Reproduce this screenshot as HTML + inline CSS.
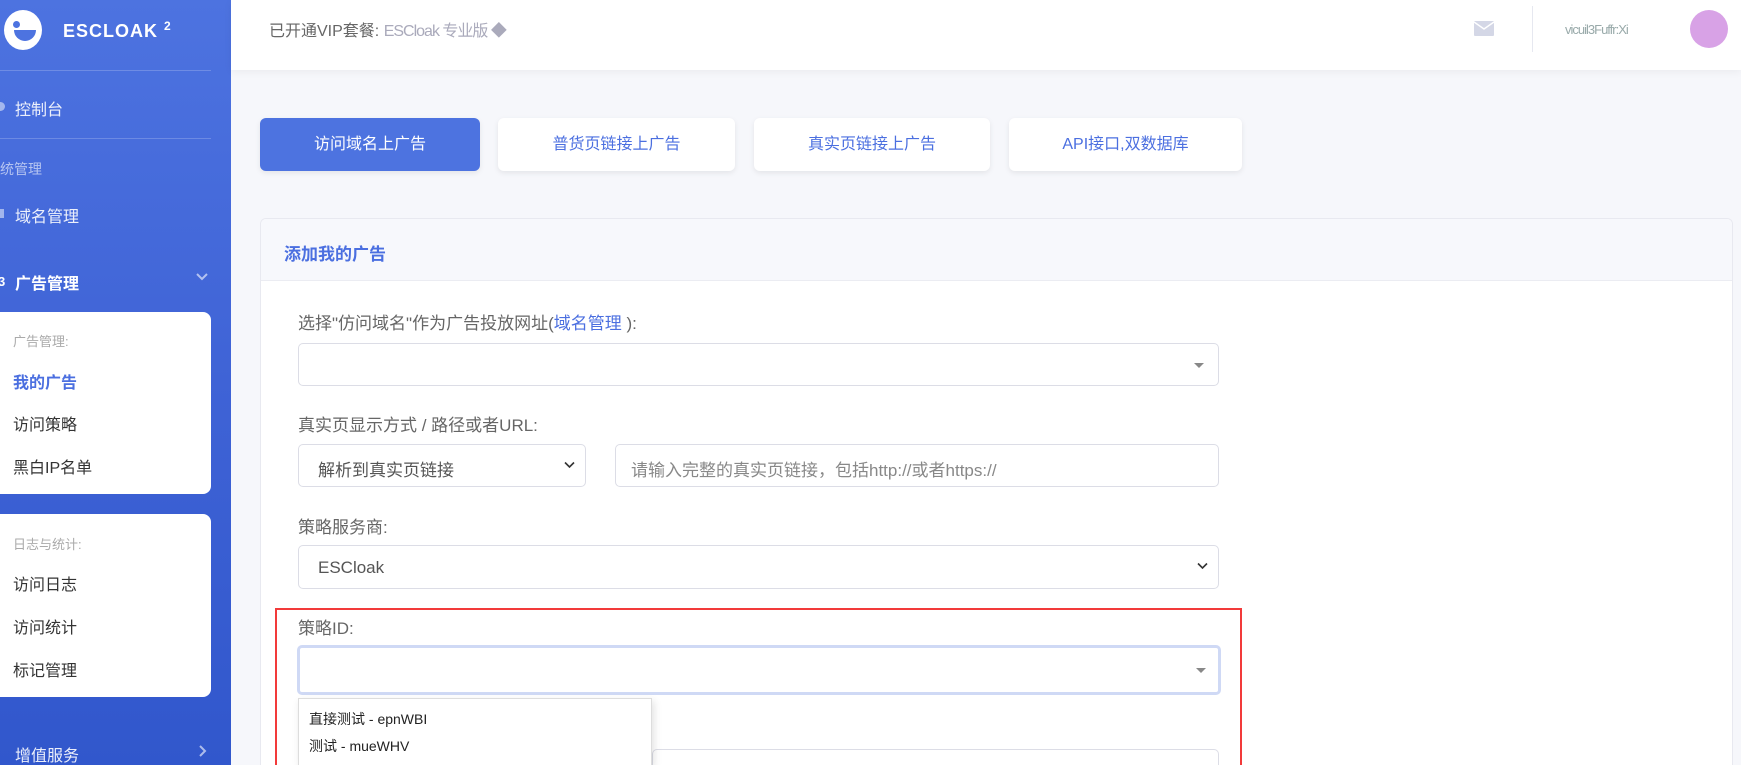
<!DOCTYPE html>
<html><head><meta charset="utf-8"><style>
*{box-sizing:border-box;margin:0;padding:0}
html{width:1741px;height:765px;overflow:hidden}
body{width:1741px;height:765px;overflow:hidden;background:#f6f7fb;font-family:"Liberation Sans","Noto Sans CJK SC",sans-serif;position:relative;color:#555}
.abs{position:absolute}
#side{left:0;top:0;width:231px;height:765px;background:linear-gradient(180deg,#4d73e0 0%,#3f63d6 50%,#3157cc 100%)}
.st{color:#fff;font-size:16px;white-space:nowrap}
.card{background:#fff;border-radius:0 8px 8px 0;left:0;width:211px}
.ci{left:13px;font-size:16px;color:#333;white-space:nowrap}
.tab{top:118px;height:53px;border-radius:6px;background:#fff;box-shadow:0 2px 6px rgba(0,0,0,.08);color:#4b6fe0;font-size:16px;text-align:center;line-height:53px}
.lbl{left:298px;font-size:17px;color:#666;white-space:nowrap}
.inp{border:1px solid #dcdde6;border-radius:5px;background:#fff}
.caret{position:absolute;right:14px;top:50%;margin-top:-2px;border-left:5px solid transparent;border-right:5px solid transparent;border-top:5px solid #888}
.chev{position:absolute;right:10px;top:50%;margin-top:-5px}
</style></head><body>
<div id="side" class="abs">
 <div class="abs" style="left:4px;top:10px;width:38px;height:40px;border-radius:50%;background:#fff"></div>
 <div class="abs" style="left:13px;top:21px;width:7px;height:7px;border-radius:50%;background:#4d73e0"></div>
 <div class="abs" style="left:14px;top:30px;width:22px;height:11px;border-radius:0 0 11px 11px;background:#4d73e0"></div>
 <div class="abs st" style="left:63px;top:19px;font-weight:bold;font-size:18px;letter-spacing:1px">ESCLOAK <sup style="font-size:12px">2</sup></div>
 <div class="abs" style="left:0;top:70px;width:211px;height:1px;background:rgba(255,255,255,.2)"></div>
 <div class="abs" style="left:-4px;top:102px;width:9px;height:9px;border-radius:50%;background:rgba(255,255,255,.5)"></div>
 <div class="abs st" style="left:15px;top:96px;opacity:.9">控制台</div>
 <div class="abs" style="left:0;top:138px;width:211px;height:1px;background:rgba(255,255,255,.2)"></div>
 <div class="abs st" style="left:0;top:159px;font-size:14px;opacity:.6">统管理</div>
 <div class="abs" style="left:-3px;top:209px;width:7px;height:9px;background:rgba(255,255,255,.5)"></div>
 <div class="abs st" style="left:15px;top:203px;opacity:.9">域名管理</div>
 <div class="abs st" style="left:15px;top:270px;font-weight:bold">广告管理</div>
 <div class="abs" style="left:-2px;top:274px;font-size:13px;color:#fff;font-weight:bold">3</div>
 <svg class="abs" style="left:196px;top:273px" width="12" height="8" viewBox="0 0 12 8"><path d="M1 1l5 5 5-5" stroke="rgba(255,255,255,.6)" stroke-width="2" fill="none"/></svg>
 <div class="abs card" style="top:312px;height:182px"></div>
 <div class="abs ci" style="top:331px;font-size:13px;color:#aaa">广告管理:</div>
 <div class="abs ci" style="top:369px;color:#4b6fe0;font-weight:bold">我的广告</div>
 <div class="abs ci" style="top:411px">访问策略</div>
 <div class="abs ci" style="top:454px">黑白IP名单</div>
 <div class="abs card" style="top:514px;height:183px"></div>
 <div class="abs ci" style="top:534px;font-size:13px;color:#aaa">日志与统计:</div>
 <div class="abs ci" style="top:571px">访问日志</div>
 <div class="abs ci" style="top:614px">访问统计</div>
 <div class="abs ci" style="top:657px">标记管理</div>
 <div class="abs st" style="left:15px;top:742px;opacity:.9">增值服务</div>
 <svg class="abs" style="left:199px;top:745px" width="8" height="12" viewBox="0 0 8 12"><path d="M1 1l5 5-5 5" stroke="rgba(255,255,255,.6)" stroke-width="2" fill="none"/></svg>
</div>
<div class="abs" style="left:231px;top:0;width:1510px;height:70px;background:#fff;box-shadow:0 2px 8px rgba(0,0,0,.05)"></div>
<div class="abs" style="left:269px;top:17px;font-size:16px;color:#666;white-space:nowrap">已开通VIP套餐: <span style="color:#aab;letter-spacing:-1px">ESCloak 专业版 ◆</span></div>
<svg class="abs" style="left:1474px;top:21px" width="20" height="15" viewBox="0 0 20 15"><rect width="20" height="15" rx="1" fill="#d4d7e6"/><path d="M0 1l10 7 10-7" stroke="#fff" stroke-width="1.5" fill="none"/></svg>
<div class="abs" style="left:1532px;top:6px;width:1px;height:46px;background:#e6e8f0"></div>
<div class="abs" style="left:1565px;top:22px;font-size:13px;color:#9aa;white-space:nowrap;letter-spacing:-1px">vicuil3Fuffr:Xi</div>
<div class="abs" style="left:1690px;top:10px;width:38px;height:38px;border-radius:50%;background:#d8a2e6"></div>
<div class="abs tab" style="left:260px;width:220px;background:#4d73e0;color:#fff">访问域名上广告</div>
<div class="abs tab" style="left:498px;width:237px">普货页链接上广告</div>
<div class="abs tab" style="left:754px;width:236px">真实页链接上广告</div>
<div class="abs tab" style="left:1009px;width:233px">API接口,双数据库</div>
<div class="abs" style="left:260px;top:218px;width:1473px;height:547px;background:#fff;border:1px solid #e8e9f0;border-bottom:none;border-radius:6px 6px 0 0;overflow:hidden">
 <div style="height:62px;background:#f7f8fc;border-bottom:1px solid #ebecf2"></div>
</div>
<div class="abs" style="left:284px;top:240px;font-size:17px;font-weight:bold;color:#4b6fe0">添加我的广告</div>
<div class="lbl abs" style="top:309px">选择"仿问域名"作为广告投放网址(<span style="color:#4b6fe0">域名管理</span> ):</div>
<div class="abs inp" style="left:298px;top:343px;width:921px;height:43px"><div class="caret"></div></div>
<div class="lbl abs" style="top:411px">真实页显示方式 / 路径或者URL:</div>
<div class="abs inp" style="left:298px;top:444px;width:288px;height:43px;font-size:17px;color:#555;padding:11px 19px">解析到真实页链接<svg class="chev" width="11" height="8" viewBox="0 0 11 8"><path d="M1 1.5l4.5 4.5 4.5-4.5" stroke="#333" stroke-width="1.6" fill="none"/></svg></div>
<div class="abs inp" style="left:615px;top:444px;width:604px;height:43px;font-size:17px;color:#888;padding:11px 15px;white-space:nowrap">请输入完整的真实页链接，包括http://或者https://</div>
<div class="lbl abs" style="top:513px">策略服务商:</div>
<div class="abs inp" style="left:298px;top:545px;width:921px;height:44px;font-size:17px;color:#555;padding:12px 19px">ESCloak<svg class="chev" width="11" height="8" viewBox="0 0 11 8"><path d="M1 1.5l4.5 4.5 4.5-4.5" stroke="#333" stroke-width="1.6" fill="none"/></svg></div>
<div class="abs" style="left:275px;top:608px;width:967px;height:157px;border:2px solid #f23a3a;border-bottom:none"></div>
<div class="lbl abs" style="top:614px">策略ID:</div>
<div class="abs" style="left:297px;top:645px;width:924px;height:50px;border:3px solid #cfd9f5;border-radius:5px;background:#fff"><div class="caret" style="right:12px"></div></div>
<div class="abs inp" style="left:652px;top:749px;width:567px;height:16px;border-bottom:none;border-radius:5px 5px 0 0"></div>
<div class="abs" style="left:298px;top:698px;width:354px;height:67px;background:#fff;border:1px solid #ddd;border-bottom:none;box-shadow:2px 3px 8px rgba(0,0,0,.12)">
 <div style="position:absolute;left:10px;top:10px;font-size:14px;color:#222;white-space:nowrap">直接测试 - epnWBI</div>
 <div style="position:absolute;left:10px;top:37px;font-size:14px;color:#222;white-space:nowrap">测试 - mueWHV</div>
</div>
</body></html>
